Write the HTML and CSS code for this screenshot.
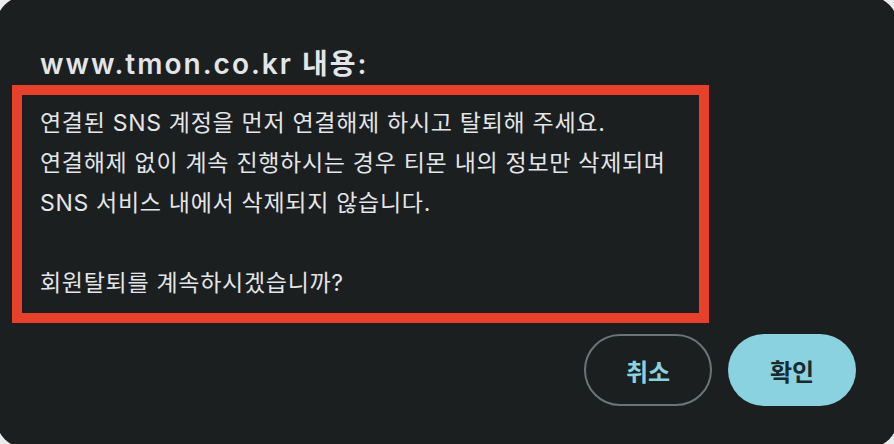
FILE: index.html
```html
<html>
  <head>
    <meta charset="utf-8" />
    <link rel="stylesheet" href="styles.css">
  </head>
  <body>
    <div class="alertDialog">
      <h2 class="alertDialog__title">www.tmon.co.kr 내용:</h2>
      <div class="alertDialog__message">
        <p class="alertDialog__line">연결된 SNS 계정을 먼저 연결해제 하시고 탈퇴해 주세요.</p>
        <p class="alertDialog__line">연결해제 없이 계속 진행하시는 경우 티몬 내의 정보만 삭제되며</p>
        <p class="alertDialog__line">SNS 서비스 내에서 삭제되지 않습니다.</p>
        <p class="alertDialog__line">&nbsp;</p>
        <p class="alertDialog__line">회원탈퇴를 계속하시겠습니까?</p>
      </div>
      <div class="alertDialog__buttons">
        <button class="alertDialog__button button--outline" type="button">취소</button>
        <button class="alertDialog__button button--filled" type="button">확인</button>
      </div>
    </div>
  </body>
</html>
```

FILE: styles.css
```css
html, body {
  margin: 0;
  height: 444px;
  overflow: hidden;
  background-color: #ececec;
}

.alertDialog {
  box-sizing: border-box;
  margin: -4px;
  height: 452px;
  padding: 48px 42px 0 16px;
  background-color: #1b1f20;
  border-radius: 30px;
  font-family: Inter, "Noto Sans CJK KR", sans-serif;
  color: #e3e5e8;
}

.alertDialog__title {
  margin: 0;
  padding-left: 28px;
  font-size: 28px;
  font-weight: 600;
  letter-spacing: 2px;
  line-height: 40px;
  color: #e3e5e8;
}

.alertDialog__message {
  box-sizing: border-box;
  width: 697px;
  margin-top: 1px;
  padding: 8px 17px 10px 18px;
  border: 10px solid #e8412a;
}

.alertDialog__line {
  margin: 0;
  font-size: 23px;
  letter-spacing: 0.7px;
  line-height: 40px;
  white-space: nowrap;
}

.alertDialog__buttons {
  display: flex;
  justify-content: flex-end;
  gap: 16px;
  margin-top: 11px;
}

.alertDialog__button {
  box-sizing: border-box;
  width: 128px;
  height: 72px;
  border-radius: 36px;
  font-family: Inter, "Noto Sans CJK KR", sans-serif;
  font-size: 24px;
  font-weight: 700;
  cursor: pointer;
}

.button--outline {
  border: 2px solid #6b7477;
  background-color: transparent;
  color: #8ad2df;
}

.button--filled {
  border: none;
  background-color: #8ad2df;
  color: #1b2a2e;
}
```
